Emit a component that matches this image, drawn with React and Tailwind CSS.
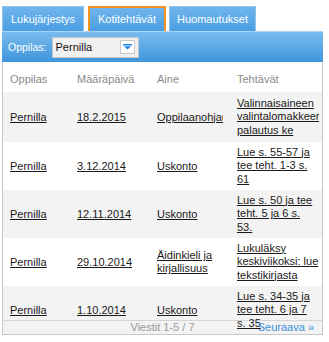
import React from 'react';

const rows = [
  { name: 'Pernilla', date: '18.2.2015', subject: 'Oppilaanohjaus', task: ['Valinnaisaineen', 'valintalomakkeen', 'palautus ke'], h: 'h-[50px]' },
  { name: 'Pernilla', date: '3.12.2014', subject: 'Uskonto', task: ['Lue s. 55-57 ja', 'tee teht. 1-3 s.', '61'], h: 'h-[48px]' },
  { name: 'Pernilla', date: '12.11.2014', subject: 'Uskonto', task: ['Lue s. 50 ja tee', 'teht. 5 ja 6 s.', '53.'], h: 'h-[48px]' },
  { name: 'Pernilla', date: '29.10.2014', subject: 'Äidinkieli ja kirjallisuus', task: ['Lukuläksy', 'keskiviikoksi: lue', 'tekstikirjasta'], h: 'h-[48px]' },
  { name: 'Pernilla', date: '1.10.2014', subject: 'Uskonto', task: ['Lue s. 34-35 ja', 'tee teht. 6 ja 7', 's. 35'], h: 'h-[48px]' },
];

const tabBase = 'h-[25px] flex items-center justify-center text-white text-[11px] bg-linear-to-b from-[#6fb5ed] to-[#4a9ee3]';

export default function App() {
  return (
    <div className="pt-[6px] pl-[2px] w-[325px] font-['Liberation_Sans',Arial,sans-serif] text-[11px] leading-[13px]">
      {/* tabs */}
      <div className="flex items-end gap-[4px]">
        <div className={`${tabBase} w-[82px] border border-b-0 border-[#8fc4ef]`}>Lukujärjestys</div>
        <div className={`${tabBase} w-[78px] border-2 border-b-0 border-[#f7941e]`}>Kotitehtävät</div>
        <div className={`${tabBase} w-[87px] ml-[-1px] border border-b-0 border-[#8fc4ef]`}>Huomautukset</div>
      </div>

      {/* student bar */}
      <div className="h-[31px] w-[321px] border-t border-[#a9d4f5] bg-linear-to-b from-[#7abcef] to-[#3c95dc] flex items-center pl-[6px] gap-[5px]">
        <span className="text-white text-[10.5px]">Oppilas:</span>
        <div className="w-[87px] h-[21px] bg-[#f1f1f1] border border-[#c4c4c4] flex items-center justify-between pl-[3px] pr-[3px]">
          <span className="text-[#111] text-[11px]">Pernilla</span>
          <span className="w-[15px] h-[14px] bg-white border border-[#c9c9c9] flex items-center justify-center">
            <svg width="9" height="6" viewBox="0 0 9 6">
              <rect x="0" y="0" width="9" height="1.5" fill="#1f87e5" />
              <path d="M1 2.2 H8 L4.5 5.6 Z" fill="#1f87e5" />
            </svg>
          </span>
        </div>
      </div>

      {/* table */}
      <div className="w-[321px] border-x border-b border-[#c8c8c8]">
        <div className="h-[258px]">
          <div className="grid grid-cols-[67px_80px_80px_92px] h-[30px] pt-[11px] text-[#8a8a8a]">
            <div className="pl-[7px]">Oppilas</div>
            <div className="pl-[7px]">Määräpäivä</div>
            <div className="pl-[7px]">Aine</div>
            <div className="pl-[7px]">Tehtävät</div>
          </div>
          {rows.map((r, i) => (
            <div key={i} className={`grid grid-cols-[67px_80px_80px_92px] items-center ${r.h} ${i % 2 === 0 ? 'bg-[#f3f3f3]' : 'bg-white'} text-[#1a1a1a]`}>
              <div className="pl-[7px]"><a className="underline">{r.name}</a></div>
              <div className="pl-[7px]"><a className="underline">{r.date}</a></div>
              <div className="pl-[7px] pr-[7px]"><div className="overflow-hidden"><a className="underline">{r.subject}</a></div></div>
              <div className="pl-[7px] pr-[3px]">
                <div className="overflow-hidden leading-[13.5px] whitespace-nowrap">
                  {r.task.map((line, j) => (
                    <div key={j}><a className="underline">{line}</a></div>
                  ))}
                </div>
              </div>
            </div>
          ))}
        </div>
        {/* footer: not positioned so the overflowing last line shows over it */}
        <div className="h-[14px] border-t border-[#d6d6d6] bg-[#f3f3f3] grid grid-cols-[1fr_auto_1fr] items-center leading-[13px]">
          <span></span>
          <span className="text-[#9a9a9a]">Viestit 1-5 / 7</span>
          <a className="justify-self-end pr-[8px] text-[#3b90dd]">Seuraava »</a>
        </div>
      </div>
    </div>
  );
}
